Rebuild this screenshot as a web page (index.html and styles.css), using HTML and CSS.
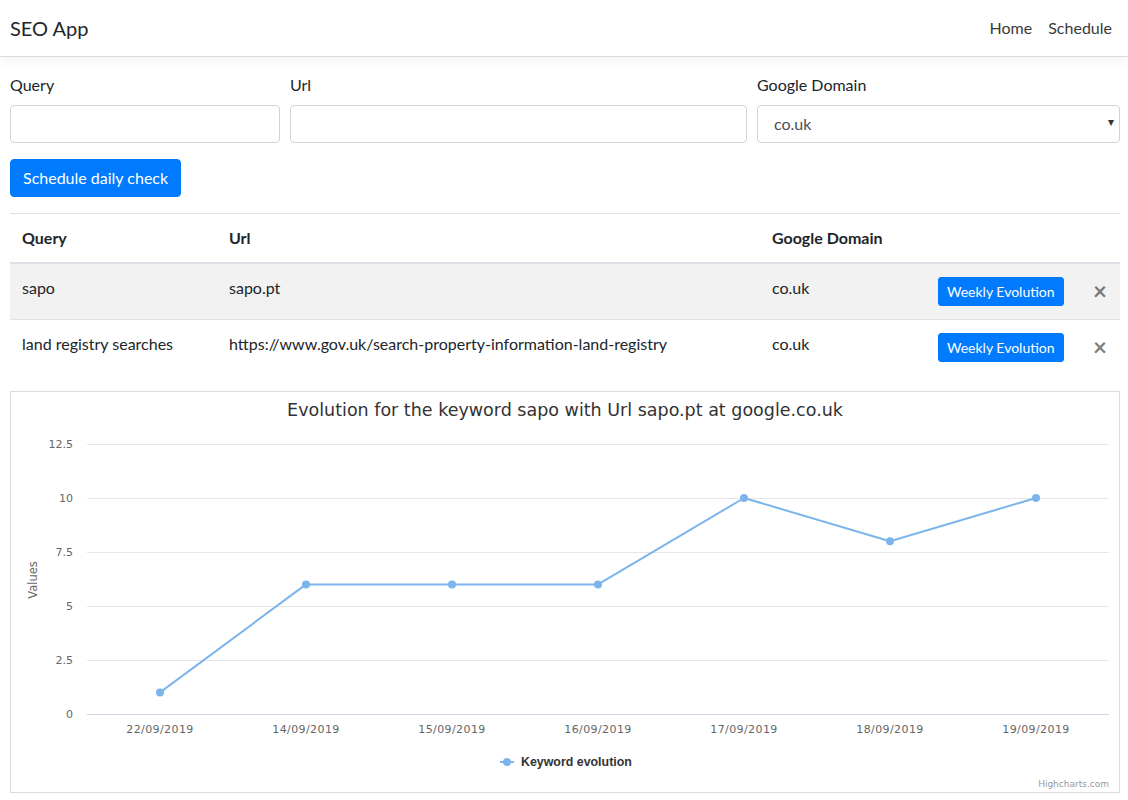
FILE: index.html
```html
<!DOCTYPE html>
<html lang="en">
<head>
<meta charset="utf-8">
<title>SEO App</title>
<link rel="stylesheet" href="styles.css">
</head>
<body>
<nav class="navbar">
  <a class="brand" href="#">SEO App</a>
  <div class="nav-links">
    <a href="#">Home</a>
    <a href="#">Schedule</a>
  </div>
</nav>
<main class="container">
  <form class="form-row">
    <div class="field">
      <label>Query</label>
      <input class="control" type="text">
    </div>
    <div class="field">
      <label>Url</label>
      <input class="control" type="text">
    </div>
    <div class="field">
      <label>Google Domain</label>
      <div class="select-wrap">
        <select class="control select">
          <option>co.uk</option>
        </select>
        <span class="caret">▾</span>
      </div>
    </div>
  </form>
  <button class="btn" type="button">Schedule daily check</button>

  <table class="table">
    <colgroup>
      <col class="c1"><col class="c2"><col class="c3"><col class="c4"><col class="c5">
    </colgroup>
    <thead>
      <tr><th>Query</th><th>Url</th><th>Google Domain</th><th></th><th></th></tr>
    </thead>
    <tbody>
      <tr class="striped">
        <td>sapo</td><td>sapo.pt</td><td>co.uk</td>
        <td><button class="btn btn-sm" type="button">Weekly Evolution</button></td>
        <td><span class="close">×</span></td>
      </tr>
      <tr>
        <td>land registry searches</td><td>https://www.gov.uk/search-property-information-land-registry</td><td>co.uk</td>
        <td><button class="btn btn-sm" type="button">Weekly Evolution</button></td>
        <td><span class="close">×</span></td>
      </tr>
    </tbody>
  </table>

  <div class="chart">
    <svg class="chart-svg" width="1108" height="400" viewBox="0 0 1108 400">
      <text class="title" x="554" y="24" text-anchor="middle">Evolution for the keyword sapo with Url sapo.pt at google.co.uk</text>
      <g class="grid">
        <line x1="76" x2="1098" y1="52.5" y2="52.5"/>
        <line x1="76" x2="1098" y1="106.5" y2="106.5"/>
        <line x1="76" x2="1098" y1="160.5" y2="160.5"/>
        <line x1="76" x2="1098" y1="214.5" y2="214.5"/>
        <line x1="76" x2="1098" y1="268.5" y2="268.5"/>
      </g>
      <line class="axis" x1="76" x2="1098" y1="322.5" y2="322.5"/>
      <g class="ylabels" text-anchor="end">
        <text x="62" y="56">12.5</text>
        <text x="62" y="110">10</text>
        <text x="62" y="164">7.5</text>
        <text x="62" y="218">5</text>
        <text x="62" y="272">2.5</text>
        <text x="62" y="326">0</text>
      </g>
      <text class="ytitle" transform="translate(26 188) rotate(-90)" text-anchor="middle">Values</text>
      <g class="xlabels" text-anchor="middle">
        <text x="149" y="341">22/09/2019</text>
        <text x="295" y="341">14/09/2019</text>
        <text x="441" y="341">15/09/2019</text>
        <text x="587" y="341">16/09/2019</text>
        <text x="733" y="341">17/09/2019</text>
        <text x="879" y="341">18/09/2019</text>
        <text x="1025" y="341">19/09/2019</text>
      </g>
      <polyline class="series" points="149,300.4 295,192.4 441,192.4 587,192.4 733,106 879,149.2 1025,106"/>
      <g class="markers">
        <circle cx="149" cy="300.4" r="4"/>
        <circle cx="295" cy="192.4" r="4"/>
        <circle cx="441" cy="192.4" r="4"/>
        <circle cx="587" cy="192.4" r="4"/>
        <circle cx="733" cy="106" r="4"/>
        <circle cx="879" cy="149.2" r="4"/>
        <circle cx="1025" cy="106" r="4"/>
      </g>
      <line class="legend-line" x1="489" x2="503" y1="370" y2="370"/>
      <circle class="legend-dot" cx="496" cy="370" r="4"/>
      <text class="legend-text" x="510" y="374">Keyword evolution</text>
      <text class="credits" x="1098" y="395" text-anchor="end">Highcharts.com</text>
    </svg>
  </div>
</main>
</body>
</html>
```

FILE: styles.css
```css
* { box-sizing: border-box; }

body {
  margin: 0;
  font-family: "Lato", "Open Sans", sans-serif;
  font-size: 16px;
  line-height: 1.5;
  color: #212529;
  background: #fff;
}

.navbar {
  height: 57px;
  display: flex;
  align-items: center;
  justify-content: space-between;
  padding: 0 16px 0 10px;
  border-bottom: 1px solid #dcdcdc;
  box-shadow: 0 4px 12px rgba(0, 0, 0, 0.05);
}

.brand {
  font-size: 20px;
  color: #212529;
  text-decoration: none;
}

.nav-links {
  display: flex;
  gap: 16px;
}

.nav-links a {
  color: #3a3a3a;
  text-decoration: none;
}

.container {
  padding: 16px 8px 0 10px;
}

.form-row {
  display: grid;
  grid-template-columns: 270px 457px 1fr;
  gap: 10px;
  margin-bottom: 16px;
}

.field label {
  display: block;
  margin-bottom: 8px;
}

.control {
  display: block;
  width: 100%;
  height: 38px;
  padding: 6px 12px;
  font: inherit;
  color: #495057;
  background: #fff;
  border: 1px solid #ced4da;
  border-radius: 4px;
}

.select-wrap {
  position: relative;
}

.select {
  appearance: none;
  -webkit-appearance: none;
  padding-left: 16px;
}

.caret {
  position: absolute;
  right: 6px;
  top: 8px;
  font-size: 12px;
  color: #333;
  pointer-events: none;
}

.btn {
  display: inline-block;
  font: inherit;
  color: #fff;
  background: #007bff;
  border: 1px solid #007bff;
  border-radius: 4px;
  height: 38px;
  padding: 6px 12px;
  line-height: 24px;
  margin-bottom: 16px;
}

.btn-sm {
  font-size: 14px;
  height: 29px;
  padding: 2px 8px;
  line-height: 21px;
  margin: 1px 0 0;
  border-radius: 3px;
}

.table {
  width: 1110px;
  border-collapse: collapse;
  table-layout: fixed;
  margin-bottom: 16px;
}

.c1 { width: 207px; }
.c2 { width: 543px; }
.c3 { width: 166px; }
.c4 { width: 155px; }
.c5 { width: 39px; }

.table th,
.table td {
  padding: 12px;
  text-align: left;
  vertical-align: top;
  border-top: 1px solid #dee2e6;
  white-space: nowrap;
}

.table thead th {
  font-weight: 700;
  border-bottom: 2px solid #dee2e6;
}

.table tbody td {
  height: 56px;
}

.striped td {
  background: #f2f2f2;
}

.close {
  display: inline-block;
  font-size: 24px;
  font-weight: 700;
  line-height: 1;
  color: #000;
  opacity: 0.5;
  margin-top: 3px;
}

.chart {
  width: 1110px;
  height: 402px;
  border: 1px solid #ddd;
}

.chart-svg {
  display: block;
  font-family: "DejaVu Sans", sans-serif;
}

.chart-svg .title {
  font-size: 17.5px;
  fill: #333;
}

.grid line {
  stroke: #e6e6e6;
  stroke-width: 1;
}

.axis {
  stroke: #ccd6eb;
  stroke-width: 1;
}

.ylabels text,
.xlabels text {
  font-size: 11px;
  fill: #666;
}

.xlabels text {
  letter-spacing: 0.4px;
}

.ytitle {
  font-size: 11.5px;
  fill: #666;
}

.series {
  fill: none;
  stroke: #7cb5ec;
  stroke-width: 2;
  stroke-linejoin: round;
}

.markers circle,
.legend-dot {
  fill: #7cb5ec;
}

.legend-line {
  stroke: #7cb5ec;
  stroke-width: 2;
}

.legend-text {
  font-family: "Liberation Sans", sans-serif;
  font-size: 12.4px;
  font-weight: 700;
  fill: #333;
}

.credits {
  font-size: 9px;
  fill: #999;
}
```
